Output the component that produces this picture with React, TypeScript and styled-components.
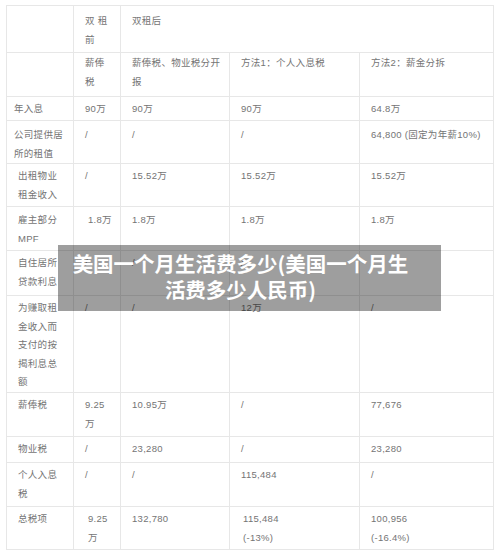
import React, { FC } from "react";
import styled, { createGlobalStyle } from "styled-components";

type Cell = {
    text: string;
    span?: number;
    indent?: number;
};

type RowType = {
    height: number;
    top?: number;
    cells: Cell[];
};

const colWidths = [67, 47, 109, 130, 134];

const rows: RowType[] = [
    { height: 47, top: 6, cells: [{ text: "" }, { text: "双 租\n前" }, { text: "双租后", span: 3 }] },
    {
        height: 44,
        top: 1,
        cells: [
            { text: "" },
            { text: "薪俸\n税" },
            { text: "薪俸税、物业税分开\n报" },
            { text: "方法1：个人入息税" },
            { text: "方法2：薪金分拆" },
        ],
    },
    { height: 24, cells: [{ text: "年入息", indent: 7 }, { text: "90万" }, { text: "90万" }, { text: "90万" }, { text: "64.8万" }] },
    {
        height: 43,
        top: 5,
        cells: [
            { text: "公司提供居\n所的租值", indent: 7 },
            { text: "/" },
            { text: "/" },
            { text: "/" },
            { text: "64,800 (固定为年薪10%)" },
        ],
    },
    {
        height: 43,
        cells: [{ text: "出租物业\n租金收入" }, { text: "/" }, { text: "15.52万" }, { text: "15.52万" }, { text: "15.52万" }],
    },
    {
        height: 44,
        top: 4,
        cells: [{ text: "雇主部分\nMPF" }, { text: "1.8万", indent: 14 }, { text: "1.8万" }, { text: "1.8万" }, { text: "1.8万" }],
    },
    {
        height: 45,
        cells: [{ text: "自住居所\n贷款利息" }, { text: "/" }, { text: "/" }, { text: "/" }, { text: "/" }],
    },
    {
        height: 97,
        cells: [
            { text: "为赚取租\n金收入而\n支付的按\n揭利息总\n额" },
            { text: "/" },
            { text: "/" },
            { text: "12万" },
            { text: "/" },
        ],
    },
    {
        height: 44,
        cells: [{ text: "薪俸税" }, { text: "9.25\n万" }, { text: "10.95万" }, { text: "/" }, { text: "77,676" }],
    },
    {
        height: 26,
        cells: [{ text: "物业税" }, { text: "/" }, { text: "23,280" }, { text: "/" }, { text: "23,280" }],
    },
    {
        height: 44,
        cells: [{ text: "个人入息\n税" }, { text: "/" }, { text: "/" }, { text: "115,484" }, { text: "/" }],
    },
    {
        height: 43,
        cells: [
            { text: "总税项" },
            { text: "9.25\n万", indent: 14 },
            { text: "132,780" },
            { text: "115,484\n(-13%)", indent: 13 },
            { text: "100,956\n(-16.4%)" },
        ],
    },
];

const App: FC = () => {
    return (
        <>
            <GlobalStyle />
            <Page>
                <Table>
                    <colgroup>
                        {colWidths.map((w, i) => (
                            <Col key={i} $w={w} />
                        ))}
                    </colgroup>
                    <tbody>
                        {rows.map((row, i) => (
                            <Row key={i} $h={row.height}>
                                {row.cells.map((cell, j) => (
                                    <Td key={j} colSpan={cell.span} $indent={cell.indent ?? 11} $top={row.top ?? 3}>
                                        {cell.text.split("\n").map((line, k) => (
                                            <Line key={k}>{line}</Line>
                                        ))}
                                    </Td>
                                ))}
                            </Row>
                        ))}
                    </tbody>
                </Table>
                <Banner>
                    美国一个月生活费多少(美国一个月生
                    <br />
                    活费多少人民币)
                </Banner>
            </Page>
        </>
    );
};

export default App;

const GlobalStyle = createGlobalStyle`
    html, body {
        margin: 0;
        padding: 0;
        background: #ffffff;
    }
`;

const Page = styled.div`
    position: relative;
    width: 500px;
    height: 557px;
    padding: 5px 0 0 6px;
    box-sizing: border-box;
    font-family: "Liberation Sans", "Noto Sans CJK SC", sans-serif;
`;

const Table = styled.table`
    width: 487px;
    table-layout: fixed;
    border-collapse: collapse;
    border: 1px solid #e7e7e7;
`;

const Col = styled.col<{ $w: number }>`
    width: ${(p) => p.$w}px;
`;

const Row = styled.tr<{ $h: number }>`
    height: ${(p) => p.$h}px;
`;

const Td = styled.td<{ $indent: number; $top: number }>`
    border: 1px solid #e7e7e7;
    vertical-align: top;
    padding: ${(p) => p.$top}px 4px 0 ${(p) => p.$indent}px;
    font-size: 9.5px;
    line-height: 18.5px;
    color: #747474;
    letter-spacing: 0.3px;
    box-sizing: border-box;
`;

const Line = styled.div`
    white-space: nowrap;
`;

const Banner = styled.div`
    position: absolute;
    left: 58px;
    top: 245px;
    width: 383px;
    height: 66px;
    box-sizing: border-box;
    padding: 5px 22px 0 4px;
    background: rgba(0, 0, 0, 0.38);
    color: #ffffff;
    font-family: "Noto Sans CJK SC", sans-serif;
    font-weight: 700;
    font-size: 20.5px;
    line-height: 26px;
    text-align: center;
    white-space: nowrap;
`;
